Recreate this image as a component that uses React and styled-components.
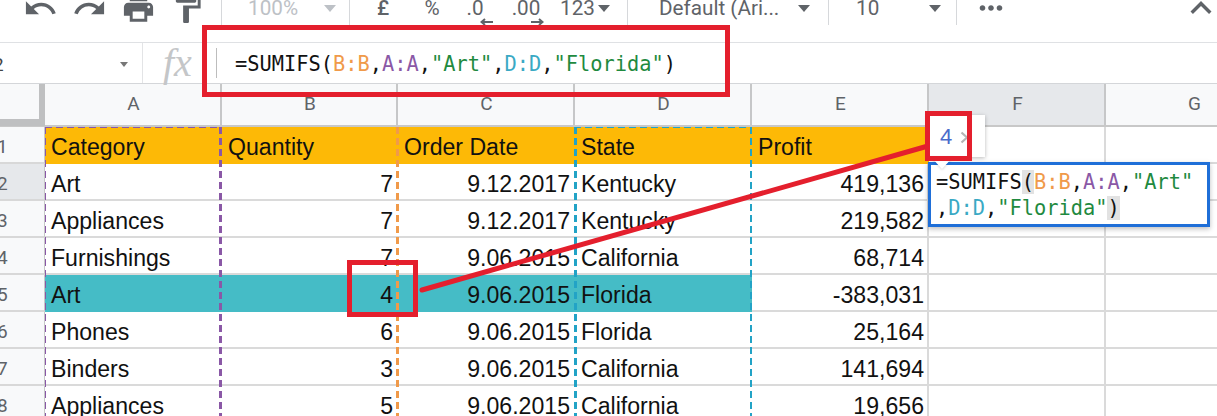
import React from "react";
import styled, { createGlobalStyle } from "styled-components";
import { MdUndo, MdRedo, MdPrint, MdFormatPaint, MdMoreHoriz, MdExpandLess } from "react-icons/md";

const Global = createGlobalStyle`
  html, body { margin: 0; padding: 0; background: #fff; }
`;

const Page = styled.div`
  position: relative; width: 1217px; height: 416px; overflow: hidden;
  background: #fff; font-family: "Liberation Sans", Arial, sans-serif; color: #111;
`;

/* toolbar */
const Toolbar = styled.div`
  display: flex; height: 42px; box-sizing: border-box; padding: 0 0 26px 16px; align-items: center;
  font-family: Roboto, sans-serif; font-size: 20.7px; color: #5f6368;
`;
const IconCell = styled.div`
  width: 49px; flex: none; display: flex; justify-content: center; align-items: center;
  font-size: ${p => p.$size || 35}px; height: 16px; color: #5f6368;
  margin-left: ${p => p.$ml || 0}px;
`;
const Divider = styled.div`
  width: 1px; height: 30px; margin-top: -5px; margin-bottom: -9px; align-self: flex-start; flex: none;
  margin-left: ${p => p.$ml || 0}px; background: #d6d8db;
`;
const Drop = styled.div`
  flex: none; width: ${p => p.$w}px; display: flex; align-items: center; justify-content: space-between;
  padding: 0 ${p => p.$pr}px 0 ${p => p.$pl}px; box-sizing: border-box; height: 16px;
  color: ${p => (p.$muted ? "#bdc1c6" : "#5f6368")}; white-space: nowrap;
`;
const Caret = styled.i`
  display: block; width: 0; height: 0; flex: none;
  border-left: 6px solid transparent; border-right: 6px solid transparent;
  border-top: 7px solid ${p => (p.$muted ? "#bdc1c6" : "#5f6368")};
`;
const Fmt = styled.div`
  position: relative; flex: none; width: ${p => p.$w}px; text-align: center; height: 16px; line-height: 16px;
  margin-left: ${p => p.$ml || 0}px;
  font-weight: ${p => p.$fw || 400}; color: #5f6368;
`;
const Arrow = styled.svg`
  position: absolute; left: ${p => p.$l}px; top: 18px; width: 14px; height: 8px;
`;
const RightIcons = styled.div`
  display: flex; align-items: center; height: 16px;
`;

/* formula bar */
const FormulaBar = styled.div`
  display: flex; height: 42px; box-sizing: border-box; align-items: center;
  border-top: 1.5px solid #dfe1e4; border-bottom: 1.5px solid #d4d6d9;
`;
const NameBox = styled.div`
  flex: none; width: 143px; height: 100%; box-sizing: border-box; display: flex; align-items: center;
  justify-content: space-between; padding: 2px 14px 0 0; border-right: 1px solid #e3e4e6;
  font: 19px Roboto, sans-serif; color: #444;
`;
const CutNum = styled.span`
  margin-left: -7px;
`;
const SmallCaret = styled.i`
  display: block; width: 0; height: 0;
  border-left: 4px solid transparent; border-right: 4px solid transparent; border-top: 5px solid #777;
`;
const Fx = styled.div`
  flex: none; width: 73px; box-sizing: border-box; padding-left: 20px;
  font: italic 40px "Liberation Serif", serif; color: #c4c6c8; line-height: 36px;
`;
const FormulaSep = styled.div`
  flex: none; width: 1px; height: 30px; background: #bdbdbd; margin-right: 18px;
`;
const Formula = styled.div`
  font: 20.35px/26px "DejaVu Sans Mono", monospace; white-space: pre; color: #111;
`;
const BarFormula = styled(Formula)`
  padding-top: 2px;
`;
const Ref = styled.span`
  color: ${p => p.$c};
`;
const Paren = styled.span`
  background: ${p => (p.$hl ? "#e2e2e2" : "transparent")};
`;

/* sheet */
const tracks = "45px 177px 176px 177px 177px 177px 177px 177px";
const HeaderRow = styled.div`
  display: grid; grid-template-columns: ${tracks}; height: 43px;
  background: #f8f9fa; border-bottom: 2px solid #c8c8c8; box-sizing: border-box;
`;
const Corner = styled.div`
  background: #f8f9fa; border-right: 6px solid #bfc0c1; border-bottom: 7px solid #bfc0c1;
  margin-bottom: -1px;
`;
const ColHead = styled.div`
  display: flex; align-items: center; justify-content: center;
  font: 19px Roboto, sans-serif; color: #5f6368; padding: 0 0 2px 2px;
  border-right: 2px solid #c6c7c8; box-sizing: border-box;
  background: ${p => (p.$active ? "#e6e8eb" : "transparent")};
`;
const Row = styled.div`
  display: grid; grid-template-columns: ${tracks}; height: 37px;
`;
const RowHead = styled.div`
  display: flex; align-items: center; font: 19px Roboto, sans-serif; color: #5f6368;
  background: ${p => (p.$active ? "#e6e8eb" : "#f8f9fa")}; padding-top: 4px;
  border-right: 1px solid #c6c7c8; border-bottom: 2px solid #d8d8d8; box-sizing: border-box;
  overflow: hidden;
`;
const RowNum = styled.span`
  margin-left: -3px;
`;
const Cell = styled.div`
  display: flex; align-items: center; box-sizing: border-box; padding: 6px ${p => (p.$grid ? 3 : 5)}px 0 6px; font-size: 23.1px;
  white-space: nowrap; overflow: visible; color: #111; justify-content: ${p => (p.$r ? "flex-end" : "flex-start")};
  background: ${p => p.$bg || "#fff"};
  border-bottom: 2px solid ${p => p.$bg || "#dadada"};
  border-right: ${p => (p.$grid ? "2px solid #dadada" : "none")};
`;

/* overlays */
const dash = "transparent 7px, transparent 11px";
const RangeMark = styled.div`
  position: absolute; top: 127px; bottom: -6px; left: ${p => p.$x}px; width: ${p => p.$w}px;
  pointer-events: none;
  background:
    repeating-linear-gradient(to bottom, ${p => p.$c} 0, ${p => p.$c} 7px, ${dash}) left top / ${p => p.$bl}px 100% no-repeat,
    repeating-linear-gradient(to bottom, ${p => p.$c} 0, ${p => p.$c} 7px, ${dash}) right top / ${p => p.$br}px 100% no-repeat,
    repeating-linear-gradient(to right, ${p => p.$c} 0, ${p => p.$c} 7px, ${dash}) left top / 100% ${p => p.$bt}px no-repeat;
`;
const RedBox = styled.div`
  position: absolute; left: ${p => p.$x}px; top: ${p => p.$y}px; width: ${p => p.$w}px; height: ${p => p.$h}px;
  box-sizing: border-box; border: 5px solid #e41f2d;
`;
const Callout = styled.svg`
  position: absolute; left: 0; top: 0; width: 1217px; height: 416px; pointer-events: none;
`;
const Tip = styled.div`
  position: absolute; left: 928px; top: 115px; width: 57px; height: 42px; box-sizing: border-box;
  background: #fff; box-shadow: 0 1px 4px rgba(0,0,0,.28);
  display: flex; align-items: center; padding: 2px 0 0 12px; gap: 8px;
  font-size: 22px; color: #4a6bcb;
`;
const TipChevron = styled.svg`
  width: 9px; height: 13px;
`;
const TipTail = styled.div`
  position: absolute; left: 930px; top: 156px; width: 0; height: 0;
  border-left: 12px solid transparent; border-right: 12px solid transparent; border-top: 13px solid #fff;
  filter: drop-shadow(0 1px 1px rgba(0,0,0,.15));
`;
const Editor = styled.div`
  position: absolute; left: 928px; top: 162px; width: 282px; height: 65px; box-sizing: border-box;
  background: #fff; border: 3px solid #1f6fd8; padding: 4px 0 0 5px;
  box-shadow: 0 2px 5px rgba(0,0,0,.25);
`;

const data = [
  ["Category", "Quantity", "Order Date", "State", "Profit"],
  ["Art", "7", "9.12.2017", "Kentucky", "419,136"],
  ["Appliances", "7", "9.12.2017", "Kentucky", "219,582"],
  ["Furnishings", "7", "9.06.2015", "California", "68,714"],
  ["Art", "4", "9.06.2015", "Florida", "-383,031"],
  ["Phones", "6", "9.06.2015", "Florida", "25,164"],
  ["Binders", "3", "9.06.2015", "California", "141,694"],
  ["Appliances", "5", "9.06.2015", "California", "19,656"],
];

const O = "#f09a4a", P = "#8a58a6", G = "#1f8a3f", T = "#3aa9c4";

export default function App() {
  return (
    <Page>
      <Global />
      <Toolbar>
        <IconCell><MdUndo /></IconCell>
        <IconCell><MdRedo /></IconCell>
        <IconCell><MdPrint /></IconCell>
        <IconCell><MdFormatPaint /></IconCell>
        <Divider $ml={9} />
        <Drop $w={127} $pl={26} $pr={13} $muted>100%<Caret $muted /></Drop>
        <Divider />
        <Fmt $w={56} $fw={500} $ml={5}>£</Fmt>
        <Fmt $w={42}>%</Fmt>
        <Fmt $w={44}>.0<Arrow $l={27} viewBox="0 0 14 8"><path d="M1 4h12M5 1 1.500 4 5 7" fill="none" stroke="#5f6368" strokeWidth="2" /></Arrow></Fmt>
        <Fmt $w={58}>.00<Arrow $l={33} viewBox="0 0 14 8"><path d="M1 4h12M9 1l3.500 3L9 7" fill="none" stroke="#5f6368" strokeWidth="2" /></Arrow></Fmt>
        <Drop $w={72} $pl={5} $pr={17}>123<Caret /></Drop>
        <Divider />
        <Drop $w={200} $pl={31} $pr={18}>Default (Ari...<Caret /></Drop>
        <Divider />
        <Drop $w={127} $pl={27} $pr={15}>10<Caret /></Drop>
        <Divider />
        <RightIcons>
          <IconCell $size={34} $ml={9}><MdMoreHoriz /></IconCell>
          <IconCell $size={42} $ml={161}><MdExpandLess /></IconCell>
        </RightIcons>
      </Toolbar>

      <FormulaBar>
        <NameBox><CutNum>2</CutNum><SmallCaret /></NameBox>
        <Fx>fx</Fx>
        <FormulaSep />
        <BarFormula>
          =SUMIFS(<Ref $c={O}>B:B</Ref>,<Ref $c={P}>A:A</Ref>,<Ref $c={G}>"Art"</Ref>,<Ref $c={T}>D:D</Ref>,<Ref $c={G}>"Florida"</Ref>)
        </BarFormula>
      </FormulaBar>

      <HeaderRow>
        <Corner />
        {["A", "B", "C", "D", "E", "F", "G"].map(l => (
          <ColHead key={l} $active={l === "F"}>{l}</ColHead>
        ))}
      </HeaderRow>

      {data.map((r, i) => {
        const bg = i === 0 ? "#fdb906" : i === 4 ? "#45bcc6" : undefined;
        return (
          <Row key={i}>
            <RowHead $active={i === 1}><RowNum>{i + 1}</RowNum></RowHead>
            <Cell $bg={bg}>{r[0]}</Cell>
            <Cell $bg={bg} $r={i > 0}>{r[1]}</Cell>
            <Cell $bg={bg} $r={i > 0}>{r[2]}</Cell>
            <Cell $bg={bg}>{r[3]}</Cell>
            <Cell $bg={i === 0 ? bg : undefined} $r={i > 0} $grid={i > 0}>{r[4]}</Cell>
            <Cell $grid />
            <Cell />
          </Row>
        );
      })}

      <RangeMark $x={45} $w={177} $c={P} $bl={1} $br={3} $bt={1} />
      <RangeMark $x={222} $w={177} $c={O} $bl={0} $br={3} $bt={0} />
      <RangeMark $x={574} $w={178} $c="#22a3c6" $bl={3} $br={2} $bt={1} />

      <RedBox $x={202} $y={25} $w={528} $h={72} />
      <RedBox $x={347} $y={260} $w={71} $h={57} />
      <Callout viewBox="0 0 1217 416">
        <line x1="422" y1="290" x2="928" y2="146" stroke="#e41f2d" strokeWidth="5" strokeLinecap="round" />
      </Callout>

      <Tip>
        4
        <TipChevron viewBox="0 0 9 13"><path d="M1.500 1.500 7 6.500l-5.500 5" fill="none" stroke="#b5b5b5" strokeWidth="2.200" /></TipChevron>
      </Tip>
      <Editor>
        <Formula>
          =SUMIFS<Paren $hl>(</Paren><Ref $c={O}>B:B</Ref>,<Ref $c={P}>A:A</Ref>,<Ref $c={G}>"Art"</Ref>{"\n"}
          ,<Ref $c={T}>D:D</Ref>,<Ref $c={G}>"Florida"</Ref><Paren $hl>)</Paren>
        </Formula>
      </Editor>
      <TipTail />
      <RedBox $x={925} $y={111} $w={47} $h={50} />
    </Page>
  );
}
